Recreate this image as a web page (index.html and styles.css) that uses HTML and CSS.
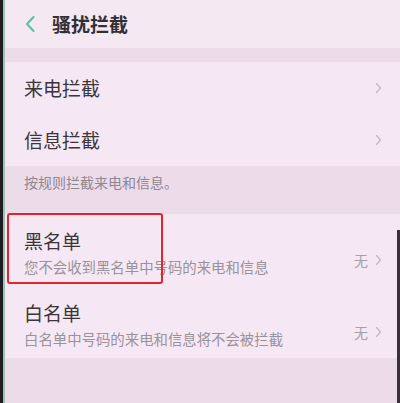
FILE: index.html
```html
<!DOCTYPE html>
<html lang="zh-CN">
<head>
<meta charset="utf-8">
<title>骚扰拦截</title>
<link rel="stylesheet" href="styles.css">
</head>
<body>
<div class="bezel-left"></div>
<div class="screen">
  <div class="header">
    <svg class="back" width="12" height="18" viewBox="0 0 12 18"><path d="M9.5 2 L3 9 L9.5 16" fill="none" stroke="#5cc3a6" stroke-width="2.2" stroke-linecap="round" stroke-linejoin="round"/></svg>
    <span class="title">骚扰拦截</span>
  </div>
  <div class="band"></div>
  <div class="section">
    <div class="row">
      <span class="label">来电拦截</span>
      <svg class="chev" width="7" height="12" viewBox="0 0 7 12"><path d="M1.5 1.5 L5.5 6 L1.5 10.5" fill="none" stroke="#c4bac4" stroke-width="1.3" stroke-linecap="round" stroke-linejoin="round"/></svg>
    </div>
    <div class="row">
      <span class="label">信息拦截</span>
      <svg class="chev" width="7" height="12" viewBox="0 0 7 12"><path d="M1.5 1.5 L5.5 6 L1.5 10.5" fill="none" stroke="#c4bac4" stroke-width="1.3" stroke-linecap="round" stroke-linejoin="round"/></svg>
    </div>
  </div>
  <div class="note">按规则拦截来电和信息。</div>
  <div class="section">
    <div class="row tall">
      <div class="texts">
        <div class="label">黑名单</div>
        <div class="sub">您不会收到黑名单中号码的来电和信息</div>
      </div>
      <div class="value"><span>无</span><svg class="chev" width="7" height="12" viewBox="0 0 7 12"><path d="M1.5 1.5 L5.5 6 L1.5 10.5" fill="none" stroke="#c4bac4" stroke-width="1.3" stroke-linecap="round" stroke-linejoin="round"/></svg></div>
    </div>
    <div class="row tall">
      <div class="texts">
        <div class="label">白名单</div>
        <div class="sub">白名单中号码的来电和信息将不会被拦截</div>
      </div>
      <div class="value"><span>无</span><svg class="chev" width="7" height="12" viewBox="0 0 7 12"><path d="M1.5 1.5 L5.5 6 L1.5 10.5" fill="none" stroke="#c4bac4" stroke-width="1.3" stroke-linecap="round" stroke-linejoin="round"/></svg></div>
    </div>
  </div>
</div>
<div class="highlight"></div>
<div class="bezel-right"></div>
</body>
</html>
```
FILE: styles.css
```css
html, body {
  margin: 0;
  padding: 0;
}
body {
  width: 400px;
  height: 403px;
  overflow: hidden;
  display: flex;
  position: relative;
  font-family: "Noto Sans CJK SC", "Noto Sans", sans-serif;
  color: #3b3539;
  background: #ecdcea;
}
.bezel-left {
  width: 3px;
  background: #1f1d22;
  border-right: 2px solid #9cc2b4;
  flex: none;
}
.screen {
  flex: 1;
  display: flex;
  flex-direction: column;
  background: #ecdcea;
}
.header {
  height: 48px;
  background: #f4e8f3;
  display: flex;
  align-items: center;
  padding-left: 19px;
  gap: 16px;
}
.back {
  display: block;
}
.title {
  font-size: 19px;
  font-weight: 700;
  color: #333034;
  line-height: 26px;
}
.band {
  height: 14px;
  background: #ecdcea;
}
.section {
  background: #f5e8f4;
}
.row {
  height: 52px;
  display: flex;
  align-items: center;
  justify-content: space-between;
  padding: 0 18px 0 19px;
}
.label {
  font-size: 19px;
  line-height: 26px;
  color: #3b3539;
}
.chev {
  display: block;
}
.note {
  height: 48px;
  box-sizing: border-box;
  padding: 6px 0 0 19px;
  font-size: 14px;
  line-height: 20px;
  color: #8f878f;
}
.row.tall {
  height: 72px;
  align-items: flex-start;
  box-sizing: border-box;
  padding-top: 14px;
}
.texts {
  display: flex;
  flex-direction: column;
}
.sub {
  margin-top: 3px;
  font-size: 14.4px;
  line-height: 20px;
  color: #9a929a;
}
.value {
  display: flex;
  align-items: center;
  gap: 7px;
  margin-top: 22px;
  font-size: 14px;
  line-height: 20px;
  color: #a79fa7;
}
.highlight {
  position: absolute;
  left: 7px;
  top: 213px;
  width: 152px;
  height: 67px;
  border: 2px solid #e3252b;
  border-radius: 3px;
}
.bezel-right {
  position: absolute;
  right: 0;
  top: 230px;
  bottom: 0;
  width: 3px;
  background: #3a3238;
}
```
